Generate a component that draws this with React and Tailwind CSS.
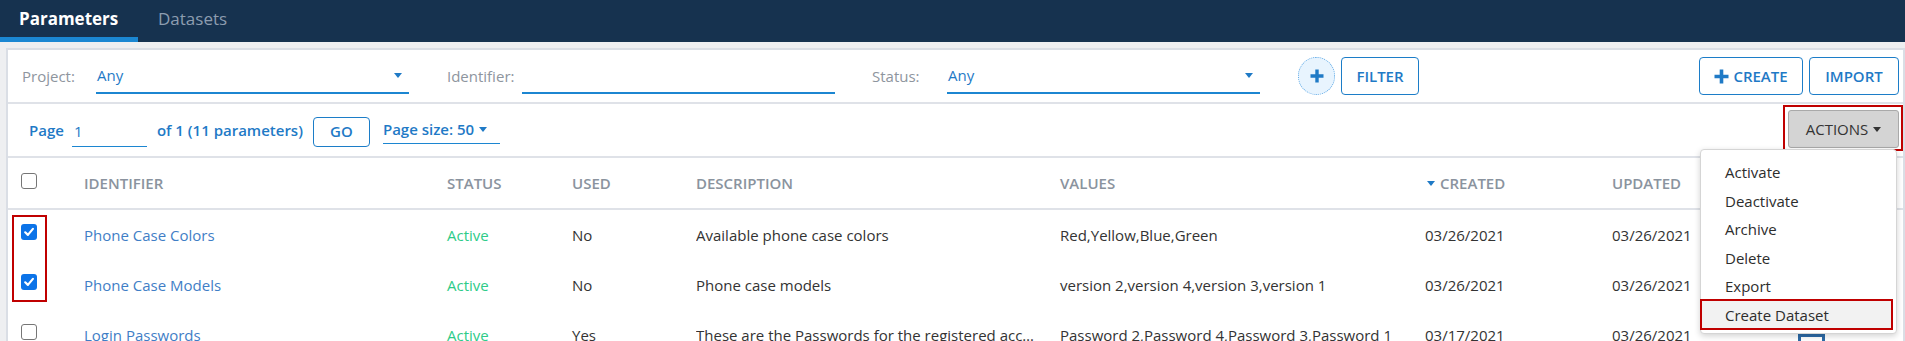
import React from "react";

const font = { fontFamily: '"Open Sans", "Noto Sans", Arial, sans-serif' };

function Caret({ color = "border-t-[#1f7ac6]", w = "border-l-[4px] border-r-[4px]", h = "border-t-[5px]" }) {
  return <span className={`inline-block w-0 h-0 ${w} ${h} border-l-transparent border-r-transparent ${color}`} />;
}

function Box({ checked }) {
  if (checked) {
    return (
      <span className="w-4 h-4 rounded-[3px] bg-[#0b73e8] flex items-center justify-center">
        <svg width="12" height="12" viewBox="0 0 12 12">
          <path d="M2.2 6.3 L4.9 8.9 L9.9 2.9" fill="none" stroke="#fff" strokeWidth="2.2" strokeLinecap="round" strokeLinejoin="round" />
        </svg>
      </span>
    );
  }
  return <span className="w-4 h-4 rounded-[3px] border-[1.5px] border-[#767676] bg-white block" />;
}

const rows = [
  { id: "Phone Case Colors", status: "Active", used: "No", desc: "Available phone case colors", values: "Red,Yellow,Blue,Green", created: "03/26/2021", updated: "03/26/2021", checked: true },
  { id: "Phone Case Models", status: "Active", used: "No", desc: "Phone case models", values: "version 2,version 4,version 3,version 1", created: "03/26/2021", updated: "03/26/2021", checked: true },
  { id: "Login Passwords", status: "Active", used: "Yes", desc: "These are the Passwords for the registered accounts of the users", values: "Password 2,Password 4,Password 3,Password 1", created: "03/17/2021", updated: "03/26/2021", checked: false },
];

const cols = "grid grid-cols-[76px_363px_125px_124px_364px_365px_187px_186px_1fr]";

export default function App() {
  return (
    <div className="w-[1905px] h-[341px] overflow-hidden bg-[#eeeff1]" style={font}>
      {/* nav */}
      <div className="h-[42px] bg-[#16324f] flex">
        <div className="w-[138px] h-full border-b-[5px] border-[#1b87d2] flex items-center pl-[19px] text-white text-[17px] font-bold">
          Parameters
        </div>
        <div className="h-full flex items-center pl-[20px] pb-[5px] text-[#8d9db0] text-[17px]">Datasets</div>
      </div>

      {/* panel */}
      <div className="mt-[6px] ml-[6px] border-2 border-[#dadee5] bg-white">
        {/* filter row */}
        <div className="h-[54px] border-b-2 border-[#dfe2e8] flex items-center pl-[14px] text-[15px]">
          <div className="w-[74px] text-[#8e959e]">Project:</div>
          <div className="w-[313px] h-[36px] border-b-2 border-[#1c86d1] flex items-center justify-between pl-px pr-[7px] text-[#1f7ac6]">
            <span>Any</span>
            <Caret />
          </div>
          <div className="ml-[38px] w-[75px] text-[#8e959e]">Identifier:</div>
          <div className="w-[313px] h-[36px] border-b-2 border-[#1c86d1]" />
          <div className="ml-[37px] w-[75px] text-[#8e959e]">Status:</div>
          <div className="w-[313px] h-[36px] border-b-2 border-[#1c86d1] flex items-center justify-between pl-px pr-[7px] text-[#1f7ac6]">
            <span>Any</span>
            <Caret />
          </div>
          <div className="ml-[38px] w-[37px] h-[38px] rounded-full border border-dotted border-[#5aa7e6] bg-[#e8f4fe] flex items-center justify-center">
            <svg width="16" height="16" viewBox="0 0 16 16">
              <path d="M8 1.5v13M1.5 8h13" stroke="#1f7ac6" strokeWidth="3.4" />
            </svg>
          </div>
          <button className="ml-[6px] w-[78px] h-[38px] rounded-[4px] border border-[#1c7dc8] text-[#1f7ac6] font-semibold text-[15px] flex items-center justify-center">
            FILTER
          </button>
          <div className="flex-1" />
          <button className="w-[104px] h-[38px] rounded-[4px] border border-[#1c7dc8] text-[#1f7ac6] font-semibold text-[15px] flex items-center justify-center gap-[4px]">
            <svg width="15" height="15" viewBox="0 0 15 15">
              <path d="M7.5 0.5v14M0.5 7.5h14" stroke="#1f7ac6" strokeWidth="3.6" />
            </svg>
            CREATE
          </button>
          <button className="ml-[6px] mr-[4px] w-[90px] h-[38px] rounded-[4px] border border-[#1c7dc8] text-[#1f7ac6] font-semibold text-[15px] flex items-center justify-center">
            IMPORT
          </button>
        </div>

        {/* pagination row */}
        <div className="h-[54px] border-b-2 border-[#dfe2e8] flex items-center pl-[21px] text-[15px] text-[#1f7ac6] font-semibold">
          <span>Page</span>
          <div className="ml-[8px] w-[75px] h-[30px] border-b-[1.5px] border-[#1c86d1] flex items-center pl-[2px] font-normal mt-[3px]">1</div>
          <span className="ml-[10px]">of 1 (11 parameters)</span>
          <button className="ml-[10px] w-[57px] h-[30px] rounded-[4px] border border-[#1c7dc8] text-[#1f7ac6] font-semibold flex items-center justify-center mt-[3px]">
            GO
          </button>
          <div className="ml-[13px] w-[117px] h-[28px] border-b-[1.5px] border-[#1c86d1] flex items-center gap-[5px]">
            <span>Page size: 50</span>
            <Caret />
          </div>
          <div className="ml-auto self-start mt-px relative border-2 border-[#c00000] pl-[3px] pr-[2px] pt-[3px] pb-[1px]">
            <button className="w-[111px] h-[38px] rounded-[3px] bg-[#d4d4d4] border border-[#a9a9a9] text-[#333] font-normal text-[15px] flex items-center justify-center gap-[5px]">
              ACTIONS
              <Caret color="border-t-[#333]" />
            </button>
            {/* dropdown menu */}
            <div className="absolute left-[-85px] top-[42px] w-[197px] z-10 bg-white border border-[#d5d5d5] rounded-[4px] shadow-[0_2px_6px_rgba(0,0,0,0.18)] pt-[8px] pb-[4px] text-[15px] text-[#2d2d2d] font-normal">
              {["Activate", "Deactivate", "Archive", "Delete", "Export"].map((t) => (
                <div key={t} className="h-[28.5px] flex items-center pl-[24px]">{t}</div>
              ))}
              <div className="relative h-[28.5px] flex items-center pl-[24px] bg-[#f2f2f2] mr-[3px]">
                Create Dataset
                <span className="absolute -left-px right-0 -top-[1.5px] -bottom-[1px] border-2 border-[#c00000]" />
              </div>
            </div>
          </div>
        </div>

        {/* table header */}
        <div className={`${cols} h-[52px] border-b-2 border-[#dfe2e8] items-center text-[15px] font-semibold text-[#8a939e]`}>
          <div className="pl-[13px] mb-[4px]"><Box /></div>
          <div>IDENTIFIER</div>
          <div>STATUS</div>
          <div>USED</div>
          <div>DESCRIPTION</div>
          <div>VALUES</div>
          <div className="flex items-center">
            <span className="ml-[2px] mr-[5px] inline-block w-0 h-0 border-l-[4.5px] border-r-[4.5px] border-t-[5px] border-l-transparent border-r-transparent border-t-[#1f7ac6]" />
            CREATED
          </div>
          <div>UPDATED</div>
          <div />
        </div>

        {/* rows */}
        <div className="relative">
          {rows.map((r, i) => (
            <div key={i} className={`${cols} h-[50px] items-center text-[15px] text-[#333]`}>
              <div className="pl-[13px] mb-[6px]"><Box checked={r.checked} /></div>
              <div className="text-[#3f7ec6]">{r.id}</div>
              <div className="text-[#2ecb88]">{r.status}</div>
              <div>{r.used}</div>
              <div className="w-[342px] truncate">{r.desc}</div>
              <div className="whitespace-nowrap">{r.values}</div>
              <div>{r.created}</div>
              <div>{r.updated}</div>
              <div>
                <svg width="27" height="26" viewBox="0 0 27 26">
                  <rect x="1.5" y="1.5" width="24" height="23" fill="none" stroke="#2d6aa6" strokeWidth="3" />
                  <rect x="0" y="10" width="27" height="5" fill="#2d6aa6" />
                </svg>
              </div>
            </div>
          ))}
          <span className="absolute left-[4px] top-[5px] w-[35px] h-[87px] border-2 border-[#c00000]" />
        </div>
      </div>
    </div>
  );
}
